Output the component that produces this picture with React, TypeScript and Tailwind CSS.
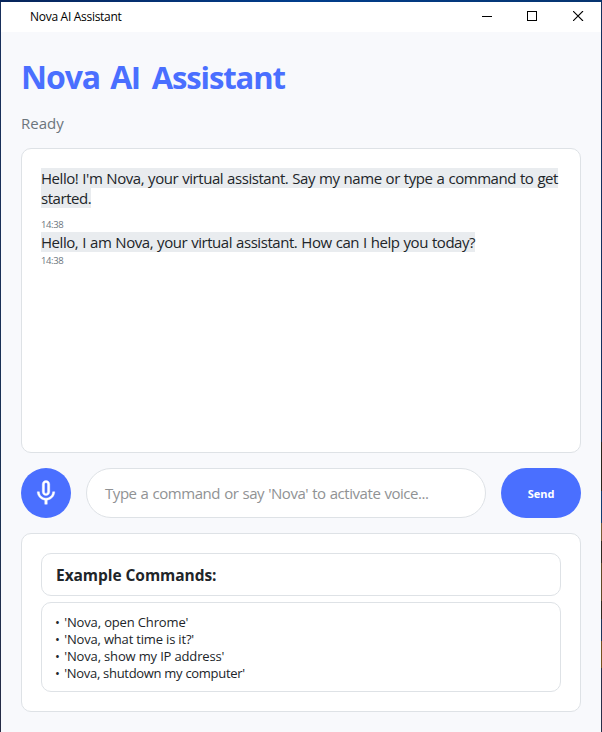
import React from "react";

const commands = [
  { text: "'Nova, open Chrome'", spacing: "tracking-[-0.15px]" },
  { text: "'Nova, what time is it?'", spacing: "tracking-[-0.18px]" },
  { text: "'Nova, show my IP address'", spacing: "tracking-[-0.16px]" },
  { text: "'Nova, shutdown my computer'", spacing: "tracking-[-0.3px]" },
];

function TitleBar() {
  return (
    <header className="flex h-[30px] items-center justify-between bg-white pl-[29px] text-black">
      <span className="whitespace-nowrap text-[12px] leading-[30px] tracking-[-0.29px]">Nova AI Assistant</span>
      <div className="flex h-full items-start pt-[9px] pr-[17px]">
        <svg className="mr-[35px]" width="10" height="10" viewBox="0 0 10 10" shapeRendering="crispEdges">
          <path d="M0 5.5H10" stroke="currentColor" />
        </svg>
        <svg className="mr-[36px]" width="10" height="10" viewBox="0 0 10 10" shapeRendering="crispEdges">
          <rect x=".5" y=".5" width="9" height="9" fill="none" stroke="currentColor" />
        </svg>
        <svg width="11" height="10" viewBox="0 0 11 10">
          <path d="M0 0L10 10M10 0L0 10" stroke="currentColor" strokeWidth="1.1" />
        </svg>
      </div>
    </header>
  );
}

function Message({ lines, last }: { lines: string[]; last?: boolean }) {
  return (
    <div>
      {lines.map((line) => (
        <div key={line} className="flex h-5">
          <span className="h-5 whitespace-nowrap bg-[#e9ecef] text-[15px] leading-[21px] tracking-[-0.45px] [word-spacing:0.55px]">{line}</span>
        </div>
      ))}
      <div className={`${last ? "" : "mt-2"} h-4 text-[9.5px] leading-[18px] tracking-[-0.4px] text-[#6c757d]`}>14:38</div>
    </div>
  );
}

export default function App() {
  return (
    <div className="flex h-[732px] w-[602px] flex-col bg-[#f8f9fc] font-['Open_Sans',sans-serif] text-[#212529]">
      <div className="h-[2px] bg-linear-to-r from-[#06245a] via-[#003d8c] to-[#06346f]" />
      <div className="flex min-h-0 flex-1">
        <div className="w-px bg-linear-to-b from-[#182f5c] via-[#1b3153] via-70% to-[#252b45]" />
        <div className="flex min-w-0 flex-1 flex-col">
          <TitleBar />
          <main className="flex flex-col px-5 pt-[22px]">
            <h1 className="h-[46px] whitespace-nowrap text-[32px] leading-[45px] font-bold tracking-[-1.1px] [word-spacing:3px] text-[#4a6fff]">
              Nova A<span className="font-['Roboto',sans-serif]">I</span>{" "}
              <span className="ml-[2px] text-[31px] tracking-[-1.1px]">Assistant</span>
            </h1>
            <p className="mt-[12px] h-[22px] text-[15px] leading-[22px] text-[#6c757d]">Ready</p>
            <section className="mt-[14px] h-[305px] rounded-[10px] border border-[#dee2e6] bg-white px-[19px] pt-[19px]">
              <Message lines={["Hello! I'm Nova, your virtual assistant. Say my name or type a command to get", "started."]} />
              <Message last lines={["Hello, I am Nova, your virtual assistant. How can I help you today?"]} />
            </section>
            <div className="mt-[15px] flex h-[50px] gap-[15px]">
              <button className="flex size-[50px] items-center justify-center rounded-full bg-[#4a6fff] text-white" aria-label="Voice">
                <svg width="30" height="30" viewBox="0 0 24 24" fill="currentColor">
                  <path fillRule="evenodd" d="M12 14c1.66 0 3-1.34 3-3V5c0-1.66-1.34-3-3-3S9 3.34 9 5v6c0 1.66 1.34 3 3 3zm-1.2-9.1c0-.66.54-1.2 1.2-1.2s1.2.54 1.2 1.2l-.01 6.2c0 .66-.53 1.2-1.19 1.2s-1.2-.54-1.2-1.2V4.9zm6.5 6.1c0 3-2.54 5.1-5.3 5.1S6.7 14 6.7 11H5c0 3.41 2.72 6.23 6 6.72V21h2v-3.28c3.28-.48 6-3.3 6-6.72h-1.7z" stroke="currentColor" strokeWidth=".3" />
                </svg>
              </button>
              <div className="flex w-[400px] items-center rounded-[25px] border border-[#dee2e6] bg-white pl-[18px]">
                <span className="whitespace-nowrap text-[15px] tracking-[-0.45px] [word-spacing:0.6px] text-[#909294]">Type a command or say 'Nova' to activate voice...</span>
              </div>
              <button className="flex w-20 items-center justify-center rounded-[25px] bg-[#4a6fff] pt-[2px] text-[11px] font-bold text-white">Send</button>
            </div>
            <section className="mt-[15px] flex h-[179px] flex-col gap-[6px] rounded-[10px] border border-[#dee2e6] bg-white p-[19px]">
              <h2 className="flex h-[43px] items-center rounded-[10px] border border-[#dee2e6] pt-[3px] pl-[14px] text-[15.5px] font-bold tracking-[-0.05px]">
                <span>Example Commands:</span>
              </h2>
              <ul className="h-[90px] rounded-[10px] border border-[#dee2e6] pt-[11px] pl-[13px] text-[13px] leading-[17px]">
                {commands.map((c) => (
                  <li key={c.text} className="whitespace-nowrap">
                    <span className="mr-px">• </span>
                    <span className={c.spacing}>{c.text}</span>
                  </li>
                ))}
              </ul>
            </section>
          </main>
        </div>
        <div className="flex w-px flex-col">
          <div className="h-[440px] bg-[#14315f]" />
          <div className="h-[49px] bg-[#29251f]" />
          <div className="h-[32px] bg-[#123c70]" />
          <div className="h-[18px] bg-[#765a35]" />
          <div className="h-[22px] bg-[#302820]" />
          <div className="h-[38px] bg-[#604825]" />
          <div className="h-[18px] bg-[#30271f]" />
          <div className="h-[22px] bg-[#1d355a]" />
          <div className="h-[27px] bg-[#73501f]" />
          <div className="flex-1 bg-[#292f49]" />
        </div>
      </div>
    </div>
  );
}
